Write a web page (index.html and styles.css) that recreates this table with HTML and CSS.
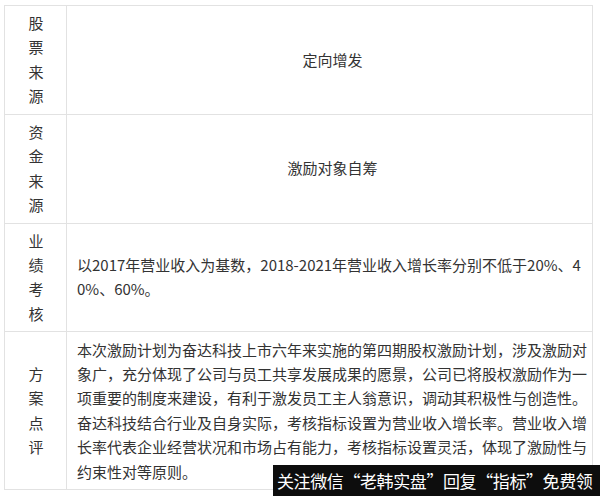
FILE: index.html
```html
<!DOCTYPE html>
<html lang="zh-CN">
<head>
<meta charset="utf-8">
<title>股权激励方案</title>
<link rel="stylesheet" href="styles.css">
</head>
<body>
<div class="page">
  <table class="plan">
    <tr class="row r1">
      <td class="label">股票来源</td>
      <td class="content center">定向增发</td>
    </tr>
    <tr class="row r2">
      <td class="label">资金来源</td>
      <td class="content center">激励对象自筹</td>
    </tr>
    <tr class="row r3">
      <td class="label">业绩考核</td>
      <td class="content">以2017年营业收入为基数，2018-2021年营业收入增长率分别不低于20%、4<br>0%、60%。</td>
    </tr>
    <tr class="row r4">
      <td class="label">方案点评</td>
      <td class="content">本次激励计划为奋达科技上市六年来实施的第四期股权激励计划，涉及激励对<br>象广，充分体现了公司与员工共享发展成果的愿景，公司已将股权激励作为一<br>项重要的制度来建设，有利于激发员工主人翁意识，调动其积极性与创造性。<br>奋达科技结合行业及自身实际，考核指标设置为营业收入增长率。营业收入增<br>长率代表企业经营状况和市场占有能力，考核指标设置灵活，体现了激励性与<br>约束性对等原则。</td>
    </tr>
  </table>
  <div class="watermark">关注微信“老韩实盘”回复“指标”免费领</div>
</div>
</body>
</html>
```
FILE: styles.css
```css
html, body {
  margin: 0;
  padding: 0;
  background: #ffffff;
}
.page {
  position: relative;
  width: 600px;
  height: 496px;
  overflow: hidden;
  padding: 5px 0 0 4px;
  box-sizing: border-box;
  font-family: "Microsoft YaHei", "Noto Sans CJK SC", "Noto Sans", sans-serif;
  color: #333333;
  font-size: 15px;
}
.plan {
  border-collapse: collapse;
  width: 589px;
}
.plan td {
  border: 1px solid #e2e2e2;
  line-height: 24.4px;
  vertical-align: middle;
}
.label {
  width: 20px;
  padding: 5px 20px 5px 21px;
  text-align: center;
}
.content {
  padding: 5px 4px 5px 10px;
  white-space: nowrap;
}
.center {
  text-align: center;
}
.r1 { height: 108px; }
.r2 { height: 109px; }
.r3 { height: 108px; }
.r4 { height: 158px; }
.watermark {
  position: absolute;
  left: 273px;
  top: 465px;
  right: 0;
  bottom: 0;
  background: #0d0d0d;
  color: #ffffff;
  font-size: 17px;
  line-height: 31px;
  padding-left: 4px;
  white-space: nowrap;
  letter-spacing: -0.4px;
}
```
